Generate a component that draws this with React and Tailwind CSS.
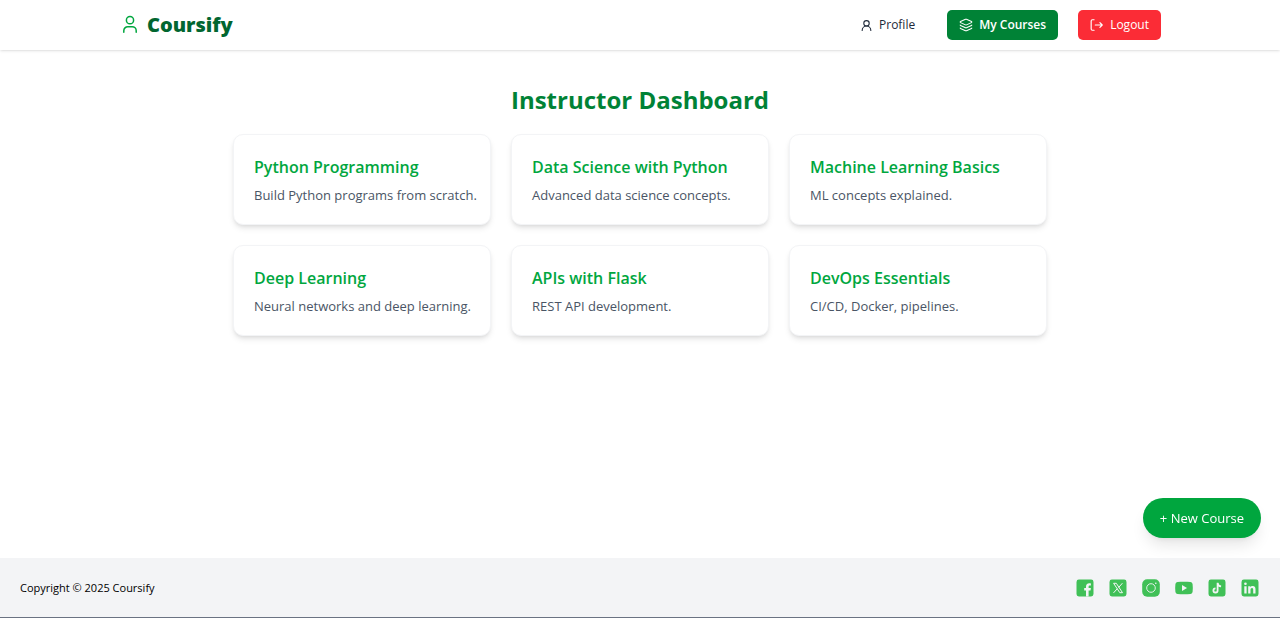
import React from "react";
import { UserRound, Layers } from "lucide-react";

const courses = [
  { title: "Python Programming", text: "Build Python programs from scratch." },
  { title: "Data Science with Python", text: "Advanced data science concepts." },
  { title: "Machine Learning Basics", text: "ML concepts explained." },
  { title: "Deep Learning", text: "Neural networks and deep learning." },
  { title: "APIs with Flask", text: "REST API development." },
  { title: "DevOps Essentials", text: "CI/CD, Docker, pipelines." },
];

function LogoIcon() {
  return (
    <svg
      viewBox="0 0 20 20"
      className="size-5 text-green-600"
      fill="none"
      stroke="currentColor"
      strokeWidth="1.5"
      strokeLinecap="round"
      aria-hidden="true"
    >
      <circle cx="11" cy="5.2" r="3.6" />
      <path d="M4.800 17.200v-1.500a4 4 0 0 1 4-4h4.400a4 4 0 0 1 4 4v1.500" />
    </svg>
  );
}

function LogoutIcon() {
  return (
    <svg
      viewBox="0 0 24 24"
      className="size-[14px]"
      fill="none"
      stroke="currentColor"
      strokeWidth="2"
      strokeLinecap="round"
      strokeLinejoin="round"
      aria-hidden="true"
    >
      <path d="M7 3H4a2 2 0 0 0-2 2v14a2 2 0 0 0 2 2h3" />
      <path d="M9 12h12M17 8l4 4-4 4" />
    </svg>
  );
}

function Square({ children }) {
  return (
    <svg viewBox="0 0 20 20" className="size-5" aria-hidden="true">
      <rect x="1.5" y="1.5" width="17" height="17" rx="2.4" fill="#40c057" />
      {children}
    </svg>
  );
}

const socials = [
  {
    name: "Facebook",
    icon: (
      <Square>
        <path
          d="M11 18.500v-6H9.200V10H11V8.800c0-2.300 1.100-3.500 3.300-3.500.7 0 1.200.1 1.600.2v2.100h-1.100c-.9 0-1.200.4-1.200 1.300V10h2.300l-.4 2.500h-1.900v6z"
          fill="#f3f4f6"
        />
      </Square>
    ),
  },
  {
    name: "X",
    icon: (
      <Square>
        <path
          d="M5.600 5.300h2.700l6.200 9.400h-2.700zM14.400 5.200l-3.800 4.300M9.300 10.700l-3.800 4.200"
          fill="none"
          stroke="#f3f4f6"
          strokeWidth="1"
        />
      </Square>
    ),
  },
  {
    name: "Instagram",
    icon: (
      <svg viewBox="0 0 20 20" className="size-5" aria-hidden="true">
        <rect x="1.2" y="1.2" width="17.6" height="17.6" rx="5" fill="#40c057" />
        <circle cx="10" cy="10" r="4.3" fill="none" stroke="#f3f4f6" strokeWidth="0.9" />
        <circle cx="14.8" cy="5.2" r="0.8" fill="#f3f4f6" />
      </svg>
    ),
  },
  {
    name: "YouTube",
    icon: (
      <svg viewBox="0 0 20 20" className="size-5" aria-hidden="true">
        <path
          d="M3.600 4.100c3.600-.6 9.200-.6 12.800 0 1.300.2 2 1 2.200 2.200.3 2.300.3 5.100 0 7.400-.2 1.200-.9 2-2.200 2.200-3.600.6-9.200.6-12.800 0-1.300-.2-2-1-2.200-2.200-.3-2.300-.3-5.100 0-7.400.2-1.200.9-2 2.200-2.200z"
          fill="#40c057"
        />
        <path d="M8 7.100v5.800l5-2.900z" fill="#f3f4f6" />
      </svg>
    ),
  },
  {
    name: "TikTok",
    icon: (
      <Square>
        <path
          d="M10.600 4.800v7.600a2.100 2.100 0 1 1-2.100-2.100M10.600 4.800c.2 2 1.500 3.300 3.500 3.500"
          fill="none"
          stroke="#f3f4f6"
          strokeWidth="1.8"
        />
      </Square>
    ),
  },
  {
    name: "LinkedIn",
    icon: (
      <Square>
        <path
          d="M4.300 8.200h2.300v7.300H4.300zM8.200 8.200h2.200v1c.4-.7 1.200-1.200 2.300-1.200 2.200 0 2.800 1.400 2.800 3.400v4.100h-2.300v-3.700c0-1-.2-1.800-1.200-1.800s-1.500.7-1.500 1.800v3.700H8.200z"
          fill="#f3f4f6"
        />
        <circle cx="5.450" cy="5.800" r="1.300" fill="#f3f4f6" />
      </Square>
    ),
  },
];

export default function App() {
  return (
    <div className="flex min-h-screen flex-col bg-white font-['Open_Sans','Noto_Sans',sans-serif] text-[13px] leading-5 text-black">
      <header className="bg-white shadow">
        <nav className="mx-auto flex max-w-[1068px] items-center justify-between px-[13px] py-[10px]">
          <a href="#" className="flex items-center gap-2 text-xl leading-7 font-extrabold text-green-800">
            <LogoIcon />
            Coursify
          </a>
          <div className="flex items-center gap-5 text-xs leading-5">
            <a href="#profile" className="flex items-center gap-[6px] rounded-[5px] px-3 py-[5px] font-medium text-gray-800">
              <UserRound className="size-[13px]" strokeWidth={2} />
              Profile
            </a>
            <a href="#courses" className="flex items-center gap-[6px] rounded-[5px] bg-green-700 px-3 py-[5px] font-semibold text-white">
              <Layers className="size-[14px]" strokeWidth={1.8} />
              My Courses
            </a>
            <button type="button" className="flex items-center gap-[6px] rounded-[5px] bg-red-500 px-3 py-[5px] text-white">
              <LogoutIcon />
              Logout
            </button>
          </div>
        </nav>
      </header>

      <main className="mx-auto w-full max-w-[854px] grow px-5 pt-[33px] pb-10">
        <h1 className="mb-[18px] text-center text-2xl leading-[33px] font-bold text-green-700">
          Instructor Dashboard
        </h1>
        <div className="grid grid-cols-3 gap-5">
          {courses.map((c) => (
            <article key={c.title} className="rounded-[10px] border border-gray-100 bg-white pt-5 pr-3 pb-[18px] pl-5 shadow-md">
              <h2 className="mb-[6px] text-base leading-6 font-semibold text-green-600">{c.title}</h2>
              <p className="leading-[21px] text-gray-600">{c.text}</p>
            </article>
          ))}
        </div>
      </main>

      <button
        type="button"
        className="fixed right-[19px] bottom-20 rounded-full bg-green-600 px-[17px] py-[10px] font-medium text-white shadow-lg"
      >
        + New Course
      </button>

      <footer className="flex items-center justify-between border-b border-gray-500 bg-gray-100 px-5 pt-5 pb-[19px]">
        <p className="text-[11px] leading-5">Copyright © 2025 Coursify</p>
        <div className="flex items-center gap-[13px]">
          {socials.map((s) => (
            <a key={s.name} href="#" aria-label={s.name}>
              {s.icon}
            </a>
          ))}
        </div>
      </footer>
    </div>
  );
}
